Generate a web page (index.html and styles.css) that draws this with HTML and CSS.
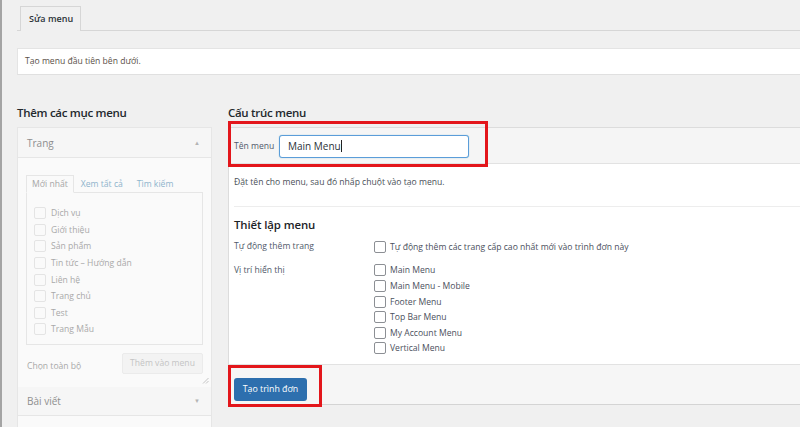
FILE: index.html
```html
<!DOCTYPE html>
<html lang="vi">
<head>
<meta charset="utf-8">
<title>Sửa menu</title>
<link rel="stylesheet" href="styles.css">
</head>
<body>
<div class="page">
  <div class="tabbar">
    <div class="tab">Sửa menu</div>
  </div>
  <div class="notice">Tạo menu đầu tiên bên dưới.</div>

  <div class="columns">
    <div class="col-left">
      <h2 class="col-title">Thêm các mục menu</h2>
      <div class="acc">
        <div class="acc-head">
          <span>Trang</span>
          <span class="arrow">▲</span>
        </div>
        <div class="acc-body">
          <div class="subtabs">
            <span class="subtab active">Mới nhất</span>
            <span class="subtab">Xem tất cả</span>
            <span class="subtab">Tìm kiếm</span>
          </div>
          <div class="itemlist">
            <div class="item"><span class="cb faded"></span>Dịch vụ</div>
            <div class="item"><span class="cb faded"></span>Giới thiệu</div>
            <div class="item"><span class="cb faded"></span>Sản phẩm</div>
            <div class="item"><span class="cb faded"></span>Tin tức – Hướng dẫn</div>
            <div class="item"><span class="cb faded"></span>Liên hệ</div>
            <div class="item"><span class="cb faded"></span>Trang chủ</div>
            <div class="item"><span class="cb faded"></span>Test</div>
            <div class="item"><span class="cb faded"></span>Trang Mẫu</div>
          </div>
          <div class="addrow">
            <span>Chọn toàn bộ</span>
            <span class="addbtn">Thêm vào menu</span>
          </div>
          <svg class="grip" width="7" height="7" viewBox="0 0 7 7"><path d="M1 6.5L6.5 1M4 6.5L6.5 4" stroke="#b5b5b5" stroke-width="0.8" fill="none"/></svg>
        </div>
        <div class="acc-head closed">
          <span>Bài viết</span>
          <span class="arrow">▼</span>
        </div>
        <div class="acc-head closed last"></div>
      </div>
    </div>

    <div class="col-right">
      <h2 class="col-title">Cấu trúc menu</h2>
      <div class="menubox">
        <div class="menu-head">
          <label class="name-label">Tên menu</label>
          <div class="name-input">Main Menu<span class="caret"></span></div>
        </div>
        <div class="menu-body">
          <p class="hint">Đặt tên cho menu, sau đó nhấp chuột vào tạo menu.</p>
          <div class="sep"></div>
          <h3 class="settings-title">Thiết lập menu</h3>
          <div class="setrow">
            <div class="setlabel">Tự động thêm trang</div>
            <div class="setopts">
              <div class="opt"><span class="cb"></span>Tự động thêm các trang cấp cao nhất mới vào trình đơn này</div>
            </div>
          </div>
          <div class="setrow second">
            <div class="setlabel">Vị trí hiển thị</div>
            <div class="setopts">
              <div class="opt"><span class="cb"></span>Main Menu</div>
              <div class="opt"><span class="cb"></span>Main Menu - Mobile</div>
              <div class="opt"><span class="cb"></span>Footer Menu</div>
              <div class="opt"><span class="cb"></span>Top Bar Menu</div>
              <div class="opt"><span class="cb"></span>My Account Menu</div>
              <div class="opt"><span class="cb"></span>Vertical Menu</div>
            </div>
          </div>
        </div>
        <div class="menu-foot">
          <span class="primary-btn">Tạo trình đơn</span>
        </div>
        <div class="hl hl-name"></div>
        <div class="hl hl-btn"></div>
      </div>
    </div>
  </div>
</div>
</body>
</html>
```

FILE: styles.css
```css
* { box-sizing: border-box; }
html, body { margin: 0; padding: 0; }
body {
  background: #f0f0f0;
  font-family: "Open Sans", "Noto Sans", sans-serif;
  color: #3c434a;
  width: 800px;
  height: 427px;
  overflow: hidden;
}
.page {
  border-left: 2px solid #a4a4a4;
  height: 427px;
  padding-left: 15px;
}
.tabbar {
  height: 31px;
  padding-top: 6px;
  padding-left: 3px;
  border-bottom: 1px solid #d6d6d6;
}
.tab {
  width: 61px;
  height: 25px;
  border: 1px solid #d6d6d6;
  border-bottom: none;
  background: #f0f0f0;
  font-size: 9px;
  font-weight: 600;
  color: #2c3338;
  line-height: 23px;
  padding-left: 8px;
  margin-bottom: -1px;
}
.notice {
  margin-top: 17px;
  height: 27px;
  background: #fff;
  border-top: 1px solid #e4e4e4;
  border-bottom: 1px solid #e0e0e0;
  border-left: 1px solid #e4e4e4;
  font-size: 8.6px;
  line-height: 25px;
  padding-left: 7px;
  color: #5a5048;
}
.columns {
  display: flex;
  margin-top: 29px;
}
.col-title {
  margin: 0;
  font-size: 11.5px;
  font-weight: 600;
  letter-spacing: -0.3px;
  color: #23282d;
  height: 23px;
  line-height: 17px;
}
.col-left {
  width: 195px;
  flex: none;
}
.col-right {
  margin-left: 16px;
  flex: 1;
  position: relative;
}
.acc {
  border: 1px solid #e6e6e6;
  border-bottom: none;
  background: #fafafa;
}
.acc-head {
  height: 30px;
  display: flex;
  justify-content: space-between;
  align-items: center;
  padding: 0 9px;
  background: #f6f6f6;
  border-bottom: 1px solid #e6e6e6;
  font-size: 10px;
  color: #8e8e8e;
}
.acc-head.closed { height: 29px; }
.acc-head.last { background: #fafafa; border-bottom: none; height: 12px; }
.arrow { font-size: 6px; color: #b4b4b4; padding-right: 2px; }
.acc-body {
  padding: 17px 8px 0 8px;
  position: relative;
  height: 229px;
}
.subtabs {
  display: flex;
  height: 18px;
  font-size: 8.6px;
  position: relative;
  z-index: 1;
}
.subtab {
  padding: 0 6px;
  line-height: 17px;
  color: #8fb4cc;
  border: 1px solid transparent;
}
.subtab.active {
  color: #a6a6a6;
  border-color: #e6e6e6;
  border-bottom-color: #fafafa;
  background: #fafafa;
  padding: 0 5px;
}
.itemlist {
  border: 1px solid #e6e6e6;
  margin-top: -1px;
  height: 153px;
  padding: 12px 0 0 7px;
}
.item {
  display: flex;
  align-items: center;
  height: 16.6px;
  font-size: 8.6px;
  color: #a9a9a9;
}
.cb {
  width: 12px;
  height: 12px;
  border: 1px solid #8c8f94;
  border-radius: 2px;
  background: #fff;
  margin-right: 5px;
  flex: none;
}
.cb.faded { border-color: #e4e4e4; background: #fafafa; }
.addrow {
  display: flex;
  justify-content: space-between;
  align-items: center;
  margin-top: 8px;
  font-size: 8.6px;
  color: #a8a8a8;
  padding-left: 1px;
}
.addrow span:first-child { padding-top: 4px; }
.addbtn {
  width: 81px;
  height: 21px;
  border: 1px solid #ebebeb;
  background: #f3f3f3;
  border-radius: 2px;
  color: #c4c4c4;
  text-align: center;
  line-height: 19px;
}
.grip { position: absolute; right: 2px; bottom: 3px; }

.menubox {
  border-left: 1px solid #dcdcdc;
  border-top: 1px solid #dcdcdc;
  position: relative;
  background: #fff;
  margin-right: -10px;
}
.menu-head {
  height: 36px;
  background: #f5f5f5;
  border-bottom: 1px solid #e2e2e2;
  display: flex;
  align-items: center;
  padding-left: 5px;
}
.name-label {
  font-size: 8.6px;
  color: #50596a;
  width: 45px;
}
.name-input {
  width: 190px;
  height: 23px;
  border: 1px solid #5b9dd9;
  border-radius: 3px;
  background: #fff;
  box-shadow: 0 0 1px rgba(30,140,190,.6);
  font-size: 10px;
  color: #2c3338;
  line-height: 21px;
  padding-left: 8px;
  margin-top: 1px;
}
.caret {
  display: inline-block;
  width: 1px;
  height: 12px;
  background: #222;
  vertical-align: -2px;
}
.menu-body {
  height: 200px;
  padding-left: 5px;
}
.hint {
  margin: 0;
  padding-top: 12px;
  font-size: 8.6px;
  color: #4a5058;
  height: 42px;
}
.sep { border-top: 1px solid #ededed; }
.settings-title {
  margin: 0;
  padding-top: 10px;
  font-size: 11.4px;
  font-weight: 600;
  letter-spacing: -0.1px;
  color: #1d2327;
  height: 32px;
}
.setrow {
  display: flex;
  font-size: 8.6px;
  color: #50596a;
}
.setrow.second { margin-top: 8px; }
.setlabel { width: 140px; padding-top: 1px; }
.setopts { display: flex; flex-direction: column; }
.opt {
  display: flex;
  align-items: center;
  height: 15.6px;
  color: #4a4f5c;
}
.opt .cb { margin-right: 4px; }
.menu-foot {
  height: 41px;
  background: #f6f6f6;
  border-top: 1px solid #e2e2e2;
  border-bottom: 1px solid #d4d4d4;
  padding: 10px 0 0 5px;
}
.primary-btn {
  display: inline-block;
  width: 73px;
  height: 23px;
  background: #2d6fae;
  border-radius: 3px;
  color: #fff;
  font-size: 8.8px;
  text-align: center;
  line-height: 23px;
}
.hl {
  position: absolute;
  border: 3px solid #e3161b;
}
.hl-name { left: -1px; top: -7px; width: 260px; height: 46px; }
.hl-btn { left: -1px; bottom: -2px; width: 94px; height: 42px; }
```
